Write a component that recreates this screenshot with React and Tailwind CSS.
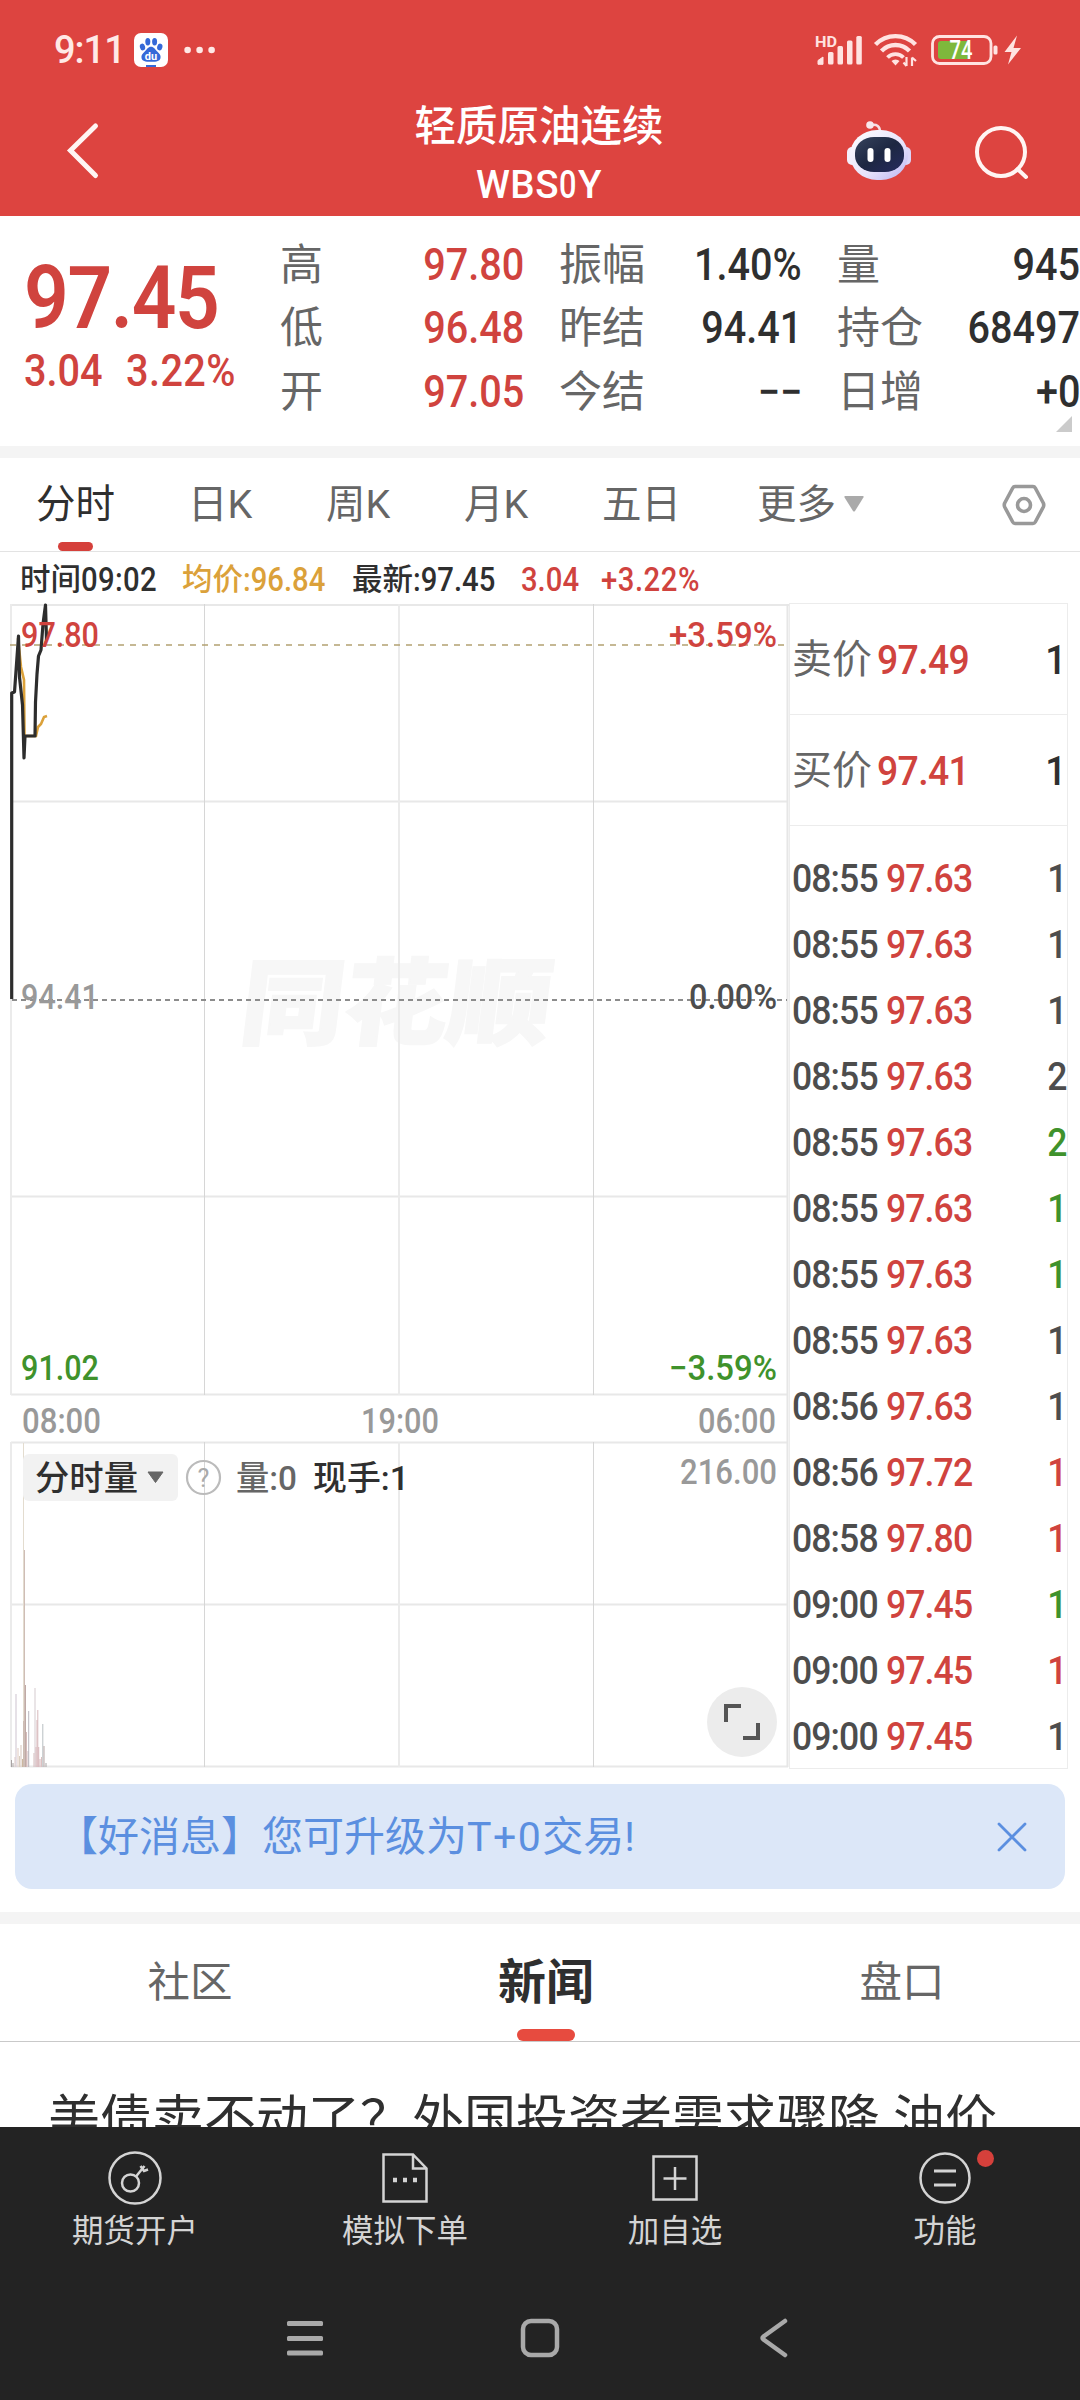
const quoteRows = [
  [["高", "97.80"], ["振幅", "1.40%"], ["量", "945"]],
  [["低", "96.48"], ["昨结", "94.41"], ["持仓", "68497"]],
  [["开", "97.05"], ["今结", "−−"], ["日增", "+0"]],
];

const trades = [
  ["08:55", "97.63", 1, "text-[#4d4d4d]"],
  ["08:55", "97.63", 1, "text-[#4d4d4d]"],
  ["08:55", "97.63", 1, "text-[#4d4d4d]"],
  ["08:55", "97.63", 2, "text-[#4d4d4d]"],
  ["08:55", "97.63", 2, "text-[#3f922c]"],
  ["08:55", "97.63", 1, "text-[#3f922c]"],
  ["08:55", "97.63", 1, "text-[#3f922c]"],
  ["08:55", "97.63", 1, "text-[#4d4d4d]"],
  ["08:56", "97.63", 1, "text-[#4d4d4d]"],
  ["08:56", "97.72", 1, "text-[#d0433e]"],
  ["08:58", "97.80", 1, "text-[#d0433e]"],
  ["09:00", "97.45", 1, "text-[#3f922c]"],
  ["09:00", "97.45", 1, "text-[#d0433e]"],
  ["09:00", "97.45", 1, "text-[#4d4d4d]"],
];

// x, height, color
const volumes = [
  [0.5, 7, "#a9a3a3"], [2, 4, "#a9a3a3"], [5, 73, "#cdc3d0"], [4, 10, "#dcc9c9"], [7, 19, "#dfc9c0"],
  [8.5, 11, "#d9cfc0"], [10, 22, "#d8c6bc"], [11.5, 8, "#cbb79f"], [12.5, 46, "#cdbdb4"],
  [13.5, 217, "#cfbdb6"], [14.5, 82, "#bfaaa6"], [15.5, 35, "#d6bcbc"], [17, 16, "#d6bcbc"], [17.7, 56, "#b9b6bd"],
  [23, 14, "#d6bcbc"], [24, 79, "#d5cbd0"], [25, 20, "#d8b9bd"], [26, 47, "#d6b3b8"], [26.8, 57, "#d8b9bd"],
  [27.7, 20, "#d6b3b8"], [29, 8, "#d6b3b8"], [30.5, 10, "#dcc0c0"], [31.8, 43, "#b8bfc2"], [33, 21, "#b5a5a5"], [35, 4, "#aaa5a5"],
];

function Num({ children, className = "" }) {
  return <span className={`inline-block scale-x-90 whitespace-nowrap font-medium ${className}`}>{children}</span>;
}

function StatusBar() {
  return (
    <div className="flex h-[100px] items-center pl-[54px] pr-[58px]">
      <span className="w-[80px] text-[38px] font-medium leading-none tracking-[-1px] text-[#ffe9e6]">9:11</span>
      <svg width="34" height="34" viewBox="0 0 34 34">
        <rect width="34" height="34" rx="7" fill="#fff" />
        <g fill="#3569d8">
          <ellipse cx="8.5" cy="14" rx="2.6" ry="3.4" transform="rotate(-15 8.5 14)" />
          <ellipse cx="13.8" cy="8.7" rx="2.5" ry="3.7" />
          <ellipse cx="20.6" cy="8.7" rx="2.5" ry="3.7" />
          <ellipse cx="25.8" cy="14" rx="2.6" ry="3.4" transform="rotate(15 25.8 14)" />
          <path d="M17 13.8c3 0 4 2.500 6 4.500 2.500 2.300 4 4 3.500 6.700-.6 3.200-3.500 3.800-9.500 3.800s-8.900-.6-9.500-3.800C7 22.300 8.500 20.600 11 18.300c2-2 3-4.500 6-4.500z" />
          <rect x="12" y="32" width="10" height="2" />
        </g>
        <text x="17" y="27" textAnchor="middle" fontSize="11" fontWeight="700" fill="#fff">du</text>
      </svg>
      <svg className="ml-4" width="36" height="10" viewBox="0 0 36 10" fill="#ffe9e6">
        <circle cx="3.6" cy="5" r="3.3" />
        <circle cx="15.6" cy="5" r="3.3" />
        <circle cx="27.6" cy="5" r="3.3" />
      </svg>
      <svg className="ml-auto" width="208" height="34" viewBox="0 0 208 34" fill="#ffe3e1">
        <text x="1" y="13.5" fontSize="15.5" fontWeight="700" textLength="22" lengthAdjust="spacingAndGlyphs">HD</text>
        <path d="M4 27.5l5-3.5v7.300H4z" stroke="#ffe3e1" strokeWidth="1" />
        <rect x="14" y="19" width="5.5" height="12.5" rx="1.5" />
        <rect x="23.5" y="13" width="5.5" height="18.5" rx="1.5" />
        <rect x="33" y="7.5" width="5.5" height="24" rx="1.5" />
        <rect x="42.3" y="3" width="5.5" height="28.5" rx="1.5" />
        <g fill="none" stroke="#ffe3e1" strokeWidth="4.4">
          <path d="M61.5 11.5a28 28 0 0 1 40 0" />
          <path d="M67.5 18a19.5 19.5 0 0 1 28 0" />
          <path d="M73.5 24.5a11 11 0 0 1 16 0" strokeWidth="3.8" />
        </g>
        <path d="M77.5 28a5 4 0 0 1 8 0l-4 4.5z" />
        <path d="M92.5 24v9M92.5 33l-3-3.5M98 33v-8.500M98 24.5l4 3.5" fill="none" stroke="#ffe3e1" strokeWidth="2.2" />
        <g transform="translate(2 0)">
          <rect x="116.5" y="3.5" width="58.5" height="27" rx="7" fill="none" stroke="#ffe3e1" strokeWidth="2.8" />
          <path d="M125 8h29v18h-29a3 3 0 0 1-3-3V11a3 3 0 0 1 3-3z" fill="#7eb83c" />
          <rect x="177.5" y="12.5" width="4" height="9" rx="1.5" />
          <text x="133.5" y="26" fontSize="25" fontWeight="500" fill="#fff" textLength="23" lengthAdjust="spacingAndGlyphs">74</text>
          <path d="M201 2.500l-12.500 16.500h7l-3.500 12.500 13-16.500h-7.500z" />
        </g>
      </svg>
    </div>
  );
}

function TitleBar() {
  return (
    <div className="flex h-[116px] items-start justify-between pl-[64px] pr-[48px]">
      <svg className="mt-[21px]" width="166" height="60" viewBox="0 0 166 60" fill="none" stroke="#fff5f3" strokeWidth="5" strokeLinecap="round">
        <path d="M31.5 5L6.500 29.500l25 25" />
      </svg>
      <div className="text-center font-medium text-white">
        <div className="mt-[2px] text-[41.5px] leading-[50px]">轻质原油连续</div>
        <div className="mt-[8px] text-[38.5px] leading-[50px] tracking-[0.5px]">
          WBS<span className="inline-block w-[19px] origin-left scale-x-[.8]">0</span>Y
        </div>
      </div>
      <div className="flex w-[184px]">
        <svg className="mt-[20px] -ml-px" width="64" height="62" viewBox="0 0 64 62">
          <defs>
            <linearGradient id="shell" x1="0" y1="0" x2="1" y2="1">
              <stop offset="0" stopColor="#fff" />
              <stop offset=".6" stopColor="#e6e2fb" />
              <stop offset="1" stopColor="#b9b2f2" />
            </linearGradient>
            <linearGradient id="face" x1="0" y1="0" x2="1" y2="1">
              <stop offset="0" stopColor="#36435d" />
              <stop offset=".5" stopColor="#1d2742" />
              <stop offset="1" stopColor="#262a5e" />
            </linearGradient>
          </defs>
          <path d="M24 5c6-1 9 1 9 7" fill="none" stroke="#f6dfe4" strokeWidth="2.5" />
          <circle cx="23" cy="5" r="3.8" fill="#f8e8ec" />
          <rect x="0" y="27" width="10" height="18" rx="5" fill="#f3effc" />
          <rect x="54" y="27" width="10" height="18" rx="5" fill="#dcd5f8" />
          <rect x="3" y="10" width="58" height="50" rx="27" ry="25" fill="url(#shell)" />
          <rect x="8" y="17" width="49" height="35" rx="19" ry="16" fill="url(#face)" />
          <rect x="20.5" y="28" width="6" height="14" rx="3" fill="#fff" />
          <rect x="37.5" y="28" width="6" height="14" rx="3" fill="#fff" />
        </svg>
        <svg className="mt-[24px] ml-[63px]" width="56" height="56" viewBox="0 0 56 56" fill="none" stroke="#fff5f3" strokeWidth="4" strokeLinecap="round">
          <circle cx="27" cy="28" r="24" />
          <path d="M43.5 45l8.500 8" />
        </svg>
      </div>
    </div>
  );
}

function QuotePanel() {
  return (
    <div className="relative flex h-[230px] overflow-hidden">
      <div className="w-[280px] shrink-0 pl-6 text-[#d0433e]">
        <Num className="mt-[38px] origin-left text-[87px] leading-[88px] font-semibold tracking-[-1.5px]">97.45</Num>
        <div className="mt-[4px] flex text-[44px] leading-[50px]">
          <Num className="w-[102px] origin-left">3.04</Num>
          <Num className="origin-left tracking-[0.5px]">3.22%</Num>
        </div>
      </div>
      <div className="flex-1 pt-[17px]">
        {quoteRows.map((row) => (
          <div key={row[0][0]} className="flex h-[63.5px] items-center text-[43px] leading-[60px]">
            {row.map(([label, value], i) => (
              <div
                key={label}
                className={
                  i === 0
                    ? "flex w-[279px] justify-between pr-[35px] text-[#d0433e]"
                    : i === 1
                      ? "flex w-[278px] justify-between pr-[35px] text-[#2f2f2f]"
                      : "flex flex-1 justify-between text-[#2f2f2f]"
                }
              >
                <span className="text-[#666]">{label}</span>
                <Num className="origin-right text-[44px]">{value}</Num>
              </div>
            ))}
          </div>
        ))}
      </div>
      <svg className="absolute right-2 bottom-[14px]" width="16" height="16" viewBox="0 0 16 16">
        <path d="M16 0v16H0z" fill="#cbcbcb" />
      </svg>
    </div>
  );
}

function PeriodTabs() {
  return (
    <div className="flex h-[94px] items-center border-b border-[#e3e3e3] text-[39.5px] leading-[50px] text-[#666]">
      <div className="relative ml-[36px] flex h-full w-[152px] items-center text-[#2f2f2f]">
        分时
        <span className="absolute bottom-0 left-[22px] h-[9px] w-[35px] rounded-full bg-[#d5403b]" />
      </div>
      <div className="w-[138px]">日K</div>
      <div className="w-[138px]">周K</div>
      <div className="w-[138px]">月K</div>
      <div className="w-[155px]">五日</div>
      <div className="flex items-center gap-[8px]">
        更多
        <svg width="20" height="16" viewBox="0 0 20 16" className="-mt-px">
          <path d="M1 0h18q1 .5.4 1.500l-8.400 13.500q-1 1-2 0L.6 1.500Q0 .5 1 0z" fill="#aaa" />
        </svg>
      </div>
      <svg className="mr-[34px] ml-auto" width="44" height="42" viewBox="0 0 44 42" fill="none" stroke="#999" strokeWidth="3.6" strokeLinejoin="round">
        <path d="M13 2.500h18q1.500 0 2.300 1.500l8 15q.9 2 0 4l-8 15q-.8 1.500-2.300 1.500H13q-1.500 0-2.300-1.500l-8-15q-.9-2 0-4l8-15q.8-1.500 2.300-1.500z" />
        <circle cx="22" cy="21" r="6.5" />
      </svg>
    </div>
  );
}

function Label({ x, y, w, size = 35, fill, end, children }) {
  return (
    <text x={x} y={y} fontSize={size} fontWeight="500" fill={fill} textLength={w} lengthAdjust="spacingAndGlyphs" textAnchor={end ? "end" : "start"}>
      {children}
    </text>
  );
}

// user units equal page pixels, y starts at the top of the chart block
function Chart() {
  return (
    <svg width="789" height="1167" viewBox="0 0 789 1167" className="block shrink-0">
      <g transform="skewX(-7)" fill="#f7f7f7" stroke="#f7f7f7" strokeWidth="2">
        <text x="291" y="435" fontSize="94" fontWeight="800" textLength="310" lengthAdjust="spacingAndGlyphs">同花顺</text>
      </g>
      <g fill="none" stroke="#e8e8e8" strokeWidth="2">
        <path d="M11 3H789M11 199.5H788M11 594.5H788M11 792.5H788M11 840.5H788M11 1002.5H788M11 1164.5H788" />
        <path d="M11 2V793M11 840V1165M399 2V793M399 840V1165" stroke="#ebebeb" />
        <path d="M204.5 2V793M204.5 840V1165M593.5 2V793M593.5 840V1165" strokeWidth="1" stroke="#d6d6d6" />
        <path d="M787.5 2V1165" stroke="#e6e6e6" strokeWidth="2" />
      </g>
      <path d="M10 43H787" stroke="#b3a171" strokeWidth="1.7" strokeDasharray="6 6" />
      <path d="M12 398H787" stroke="#8c8c8c" strokeWidth="1.8" strokeDasharray="5 4" />
      <path d="M18 36L21 65 24 78 24.5 134H36L38 125 41 122 44 115 47 114" fill="none" stroke="#dba13a" strokeWidth="2.6" />
      <path d="M11.7 397V91L14.5 90 18.5 34 19.5 75 22.5 103 24 156 25 134H35L35.5 100 37 72 38.5 54 41 48 43 22 45.5 3 46.5 38" fill="none" stroke="#2d2d2d" strokeWidth="3.2" strokeLinejoin="round" />
      <Label x="21" y="45" w="78" fill="#d0433e">97.80</Label>
      <Label x="777" y="45" w="108" fill="#d0433e" end>+3.59%</Label>
      <Label x="21" y="407" w="78" fill="#999">94.41</Label>
      <Label x="777" y="407" w="88" fill="#4d4d4d" end>0.00%</Label>
      <Label x="21" y="778" w="78" fill="#3f922c">91.02</Label>
      <Label x="777" y="778" w="108" fill="#3f922c" end>−3.59%</Label>
      <Label x="22" y="831" w="79" fill="#999">08:00</Label>
      <Label x="361" y="831" w="78" fill="#999">19:00</Label>
      <Label x="776" y="831" w="78" fill="#999" end>06:00</Label>
      <Label x="777" y="882" w="97" fill="#999" end>216.00</Label>
      <path d="M23.5 841V1165" stroke="#e3dccf" strokeWidth="1" />
      {volumes.map(([x, h, color]) => (
        <rect key={x} x={x + 10.5} y={1165 - h} width="1" height={h} fill={color} />
      ))}
      <rect x="23" y="852" width="155" height="47" rx="6" fill="#f2f2f2" />
      <Label x="35" y="888" w="103" size={34} fill="#2f2f2f">分时量</Label>
      <path d="M148 870h15l-7.500 10.500z" fill="#666" stroke="#666" strokeWidth="1" strokeLinejoin="round" />
      <circle cx="203.5" cy="875.5" r="16.5" fill="none" stroke="#bbb" strokeWidth="2.2" />
      <text x="203.5" y="884.5" fontSize="25" fill="#aaa" textAnchor="middle">?</text>
      <Label x="236" y="888" w="61" size={34} fill="#666">量:0</Label>
      <Label x="313" y="888" w="96" size={34} fill="#2f2f2f">现手:1</Label>
      <circle cx="742" cy="1120" r="35" fill="#ececec" />
      <path d="M741 1104H726V1120M743 1136H758V1121" fill="none" stroke="#555" strokeWidth="4" />
    </svg>
  );
}

function OrderPanel() {
  return (
    <div className="mt-px h-[1166px] w-[279px] border border-[#ececec] pl-[3px] text-[40px] leading-[50px] text-[#666]">
      {[["卖价", "97.49"], ["买价", "97.41"]].map(([label, price]) => (
        <div key={label} className="-ml-[3px] flex h-[111px] items-center border-b border-[#ececec] pt-px pl-[2px]">
          <span className="w-[85px]">{label}</span>
          <Num className="origin-left text-[41.5px] tracking-[-0.7px] text-[#d0433e]">{price}</Num>
          <Num className="ml-auto origin-right text-[41.5px] text-[#2f2f2f]">1</Num>
        </div>
      ))}
      <div className="pt-[20px] text-[39.5px] tracking-[-1px]">
        {trades.map(([time, price, qty, color], i) => (
          <div key={i} className="-ml-px flex h-[66px] items-center pr-px">
            <Num className="w-[94px] origin-left text-[#4d4d4d]">{time}</Num>
            <Num className="origin-left text-[#d0433e]">{price}</Num>
            <Num className={`ml-auto origin-right ${color}`}>{qty}</Num>
          </div>
        ))}
      </div>
    </div>
  );
}

function ChartInfo() {
  return (
    <div className="flex h-[50px] items-center pt-[6px] pl-[20px] text-[30.5px] leading-[40px] font-medium whitespace-nowrap text-[#2f2f2f]">
      <span className="flex w-[162px]">时间<Num className="origin-left text-[32.5px] tracking-[0.4px]">09:02</Num></span>
      <span className="flex w-[170px] text-[#dba13a]">均价<Num className="origin-left text-[32.5px]">:96.84</Num></span>
      <span className="flex w-[169px]">最新<Num className="origin-left text-[32.5px]">:97.45</Num></span>
      <Num className="w-[80px] origin-left text-[32.5px] text-[#d0433e]">3.04</Num>
      <Num className="origin-left text-[32.5px] tracking-[0.6px] text-[#d0433e]">+3.22%</Num>
    </div>
  );
}

function Banner() {
  return (
    <div className="mx-[15px] mt-[15px] flex h-[105px] items-center justify-between rounded-[17px] bg-[#dce7f8] pr-[38px] pl-[42px] text-[41px] leading-[50px] text-[#5b8fe0]">
      <span>
        【好消息】您可升级为<span className="tracking-[1.5px]">T+0</span>交易!
      </span>
      <svg width="30" height="30" viewBox="0 0 30 30" fill="none" stroke="#5b8fe0" strokeWidth="2.8" strokeLinecap="round">
        <path d="M2 2l26 26M28 2L2 28" />
      </svg>
    </div>
  );
}

function NewsTabs() {
  return (
    <div className="flex h-[118px] items-center border-b border-[#c9c9c9] pl-[12px] text-[42.5px] leading-[50px] text-[#666]">
      <div className="flex-1 pt-px text-center">社区</div>
      <div className="relative flex h-full flex-1 items-center justify-center text-[48px] font-bold text-[#2f2f2f]">
        新闻
        <span className="absolute bottom-0 h-[12px] w-[58px] rounded-full bg-[#e74b3f]" />
      </div>
      <div className="flex-1 pt-px text-center">盘口</div>
    </div>
  );
}

const actions = [
  {
    label: "期货开户",
    icon: (
      <>
        <circle cx="27" cy="28" r="25.5" />
        <circle cx="22.5" cy="33" r="8.5" />
        <path d="M28 26.5L36.5 16M32.5 16l3.500 5 4-1.500" />
      </>
    ),
  },
  {
    label: "模拟下单",
    icon: (
      <>
        <path d="M5.5 4.500H35L48.5 18.500V51.500H5.500zM35 4.500V18.500H48.500" />
        <path d="M15 30h4M25 30h4M35 30h4" strokeWidth="4.5" />
      </>
    ),
  },
  {
    label: "加自选",
    icon: (
      <>
        <rect x="5.5" y="6.5" width="43" height="43" />
        <path d="M27 17v23M15.5 28.500h23" />
      </>
    ),
  },
  {
    label: "功能",
    icon: (
      <>
        <circle cx="27" cy="28" r="24.5" />
        <path d="M16 21h22M16 35h22" strokeWidth="3" />
      </>
    ),
  },
];

function BottomBar() {
  return (
    <div className="relative h-[273px] bg-[#232323]">
      <div className="flex pt-[23px]">
        {actions.map(({ label, icon }) => (
          <div key={label} className="relative flex flex-1 flex-col items-center text-[31.5px] leading-[40px] text-[#d4d4d4]">
            <svg width="54" height="56" viewBox="0 0 54 56" fill="none" stroke="#d4d4d4" strokeWidth="2.5">{icon}</svg>
            <span className="mt-[6px]">{label}</span>
            {label === "功能" && <i className="absolute top-0 right-[86px] size-[17px] rounded-full bg-[#d5403b]" />}
          </div>
        ))}
      </div>
      <div className="mt-[66px] flex justify-center gap-[196px]">
        <svg width="38" height="40" viewBox="0 0 38 40" fill="#a9a9a9">
          <rect x="1" y="3" width="36" height="5" rx="1.5" />
          <rect x="1" y="18" width="36" height="5" rx="1.5" />
          <rect x="1" y="32.5" width="36" height="5" rx="1.5" />
        </svg>
        <svg width="40" height="40" viewBox="0 0 40 40" fill="none" stroke="#a9a9a9" strokeWidth="4.5">
          <rect x="3" y="3" width="34" height="34" rx="8" />
        </svg>
        <svg width="38" height="40" viewBox="0 0 38 40" fill="none" stroke="#a9a9a9" strokeWidth="4.5" strokeLinecap="round" strokeLinejoin="round">
          <path d="M29 3L7.500 18.500q-2 1.500 0 3L29 37" />
        </svg>
      </div>
    </div>
  );
}

export default function App() {
  return (
    <div className="flex h-[2400px] w-[1080px] flex-col overflow-hidden bg-white font-[Roboto,'Noto_Sans_CJK_SC',sans-serif]">
      <header className="h-[216px] bg-[#dd4440]">
        <StatusBar />
        <TitleBar />
      </header>
      <QuotePanel />
      <div className="h-3 bg-[#f4f4f4]" />
      <PeriodTabs />
      <ChartInfo />
      <div className="flex h-[1167px]">
        <Chart />
        <OrderPanel />
      </div>
      <Banner />
      <div className="mt-[23px] h-3 bg-[#f4f4f4]" />
      <NewsTabs />
      <div className="h-[85px] overflow-hidden pt-[47px] pl-[48px] text-[52px] leading-[64px] whitespace-nowrap text-[#2f2f2f]">
        美债卖不动了？外国投资者需求骤降 油价
      </div>
      <BottomBar />
    </div>
  );
}
